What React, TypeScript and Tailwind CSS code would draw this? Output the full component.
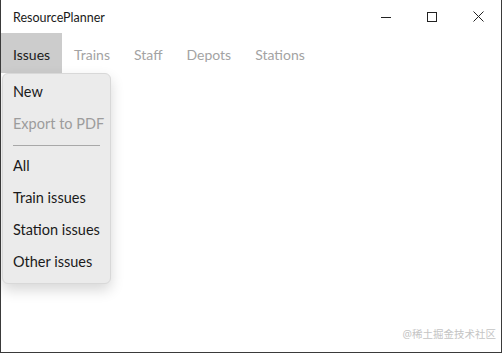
export default function App() {
  const tabs = ["Issues", "Trains", "Staff", "Depots", "Stations"];
  const font = { fontFamily: 'Lato, "Liberation Sans", sans-serif' };

  return (
    <div
      className="w-[502px] h-[353px] bg-white border-x border-b border-[#3a3a3a] flex flex-col text-[#1a1a1a] overflow-hidden whitespace-nowrap"
      style={font}
    >
      {/* title bar */}
      <div className="h-[33px] flex items-center shrink-0">
        <span className="pl-3 pt-[3px] text-[12.5px] flex-1">ResourcePlanner</span>
        <div className="flex h-full">
          <div className="w-[46px] flex items-center justify-center">
            <svg width="10" height="10" viewBox="0 0 10 10">
              <path d="M0 5.5h10" stroke="#222" strokeWidth="1" />
            </svg>
          </div>
          <div className="w-[46px] flex items-center justify-center">
            <svg width="10" height="10" viewBox="0 0 10 10">
              <rect x="0.5" y="0.5" width="9" height="9" fill="none" stroke="#222" strokeWidth="1" />
            </svg>
          </div>
          <div className="w-[46px] flex items-center justify-center">
            <svg width="11" height="11" viewBox="0 0 11 11">
              <path d="M0.5 0.5l10 10M10.5 0.5l-10 10" stroke="#222" strokeWidth="1" />
            </svg>
          </div>
        </div>
      </div>

      {/* menu bar */}
      <div className="flex h-10 shrink-0 text-[14px]">
        {tabs.map((t, i) => (
          <div
            key={t}
            className={
              i === 0
                ? "px-3 pt-[2px] flex items-center bg-[#cccccc] text-[#1a1a1a]"
                : "px-3 pt-[2px] flex items-center text-[#a3a3a3]"
            }
          >
            {t}
          </div>
        ))}
      </div>

      {/* content */}
      <div className="relative flex-1">
        <div className="absolute left-[1px] top-0 w-[109px] bg-[#ebebeb] border border-[#d8d8d8] rounded-[6px] shadow-[0_6px_14px_rgba(0,0,0,0.16)] pt-[2px] pb-[5px] text-[14.5px]">
          <div className="h-8 flex items-center px-[10px]">New</div>
          <div className="h-8 flex items-center px-[10px] text-[#9c9c9c]">Export to PDF</div>
          <div className="pt-[5px] pb-[4px] px-[10px]">
            <div className="h-px bg-[#a8a8a8]" />
          </div>
          <div className="h-8 flex items-center px-[10px]">All</div>
          <div className="h-8 flex items-center px-[10px]">Train issues</div>
          <div className="h-8 flex items-center px-[10px]">Station issues</div>
          <div className="h-8 flex items-center px-[10px]">Other issues</div>
        </div>
        <div
          className="absolute right-[5px] bottom-[9px] text-[10.5px] text-[#c4c4c4]"
          style={{ fontFamily: '"Noto Sans", "Noto Sans CJK SC", sans-serif' }}
        >
          @稀土掘金技术社区
        </div>
      </div>
    </div>
  );
}
